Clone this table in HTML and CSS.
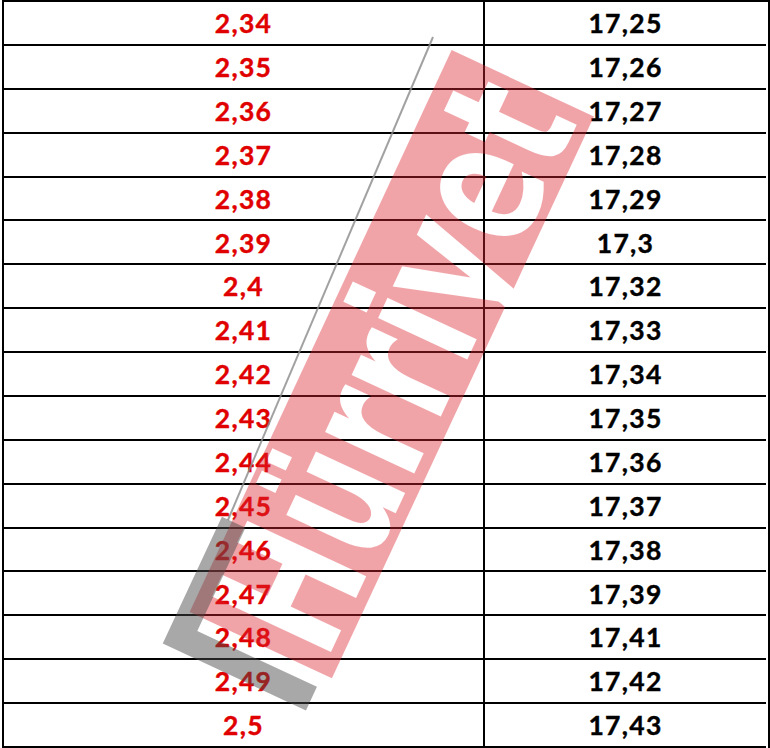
FILE: index.html
```html
<!DOCTYPE html>
<html lang="tr">
<head>
<meta charset="utf-8">
<title>Tablo</title>
<link rel="stylesheet" href="styles.css">
</head>
<body>
<div class="page">
  <div class="table">
    <div class="cell left">2,34</div><div class="cell right">17,25</div>
    <div class="cell left">2,35</div><div class="cell right">17,26</div>
    <div class="cell left">2,36</div><div class="cell right">17,27</div>
    <div class="cell left">2,37</div><div class="cell right">17,28</div>
    <div class="cell left">2,38</div><div class="cell right">17,29</div>
    <div class="cell left">2,39</div><div class="cell right">17,3</div>
    <div class="cell left">2,4</div><div class="cell right">17,32</div>
    <div class="cell left">2,41</div><div class="cell right">17,33</div>
    <div class="cell left">2,42</div><div class="cell right">17,34</div>
    <div class="cell left">2,43</div><div class="cell right">17,35</div>
    <div class="cell left">2,44</div><div class="cell right">17,36</div>
    <div class="cell left">2,45</div><div class="cell right">17,37</div>
    <div class="cell left">2,46</div><div class="cell right">17,38</div>
    <div class="cell left">2,47</div><div class="cell right">17,39</div>
    <div class="cell left">2,48</div><div class="cell right">17,41</div>
    <div class="cell left">2,49</div><div class="cell right">17,42</div>
    <div class="cell left">2,5</div><div class="cell right">17,43</div>
  </div>
  <svg class="watermark" width="770" height="748" viewBox="0 0 770 748" aria-hidden="true">
    <defs>
      <mask id="cut" maskUnits="userSpaceOnUse" x="-100" y="-100" width="900" height="400">
        <rect x="-100" y="-100" width="900" height="400" fill="#fff"/>
        <text x="52" y="148" class="wm-text" textLength="598" lengthAdjust="spacingAndGlyphs">Hürriyet</text>
      </mask>
    </defs>
    <line x1="228" y1="520" x2="433" y2="37" class="wm-line"/>
    <g transform="translate(170 647) rotate(-65)">
      <rect x="40" y="3" width="620" height="157" class="wm-box" mask="url(#cut)"/>
      <path d="M0 -8 H140 V18 H26 V150 H0 Z" class="wm-gray"/>
    </g>
  </svg>
</div>
</body>
</html>
```

FILE: styles.css
```css
html, body {
  margin: 0;
  padding: 0;
  background: #fff;
}

.page {
  position: relative;
  width: 770px;
  height: 748px;
  overflow: hidden;
}

.table {
  margin-left: 2px;
  width: 764px;
  border: 2px solid #000;
  border-bottom: none;
  display: grid;
  grid-template-columns: 481px 281px;
  grid-auto-rows: 43.875px;
  font-family: Lato, "Open Sans", sans-serif;
  font-weight: 700;
  font-size: 26.5px;
  line-height: 1;
}

.cell {
  box-sizing: border-box;
  border-bottom: 2px solid #000;
  display: flex;
  align-items: center;
  justify-content: center;
  padding-top: 1px;
  letter-spacing: 1.3px;
  -webkit-text-stroke: 0.4px currentColor;
}

.left {
  border-right: 2px solid #000;
  color: #e00000;
}

.right {
  color: #000;
}

.watermark {
  position: absolute;
  left: 0;
  top: 0;
  pointer-events: none;
}

.wm-box {
  fill: rgb(220, 40, 50);
  opacity: 0.42;
}

.wm-gray {
  fill: #4a4a4a;
  opacity: 0.48;
}

.wm-line {
  stroke: #8a8a8a;
  stroke-width: 2;
  opacity: 0.8;
}

.wm-text {
  font-family: "DejaVu Sans", sans-serif;
  font-weight: 700;
  font-size: 180px;
  fill: #000;
}
```
